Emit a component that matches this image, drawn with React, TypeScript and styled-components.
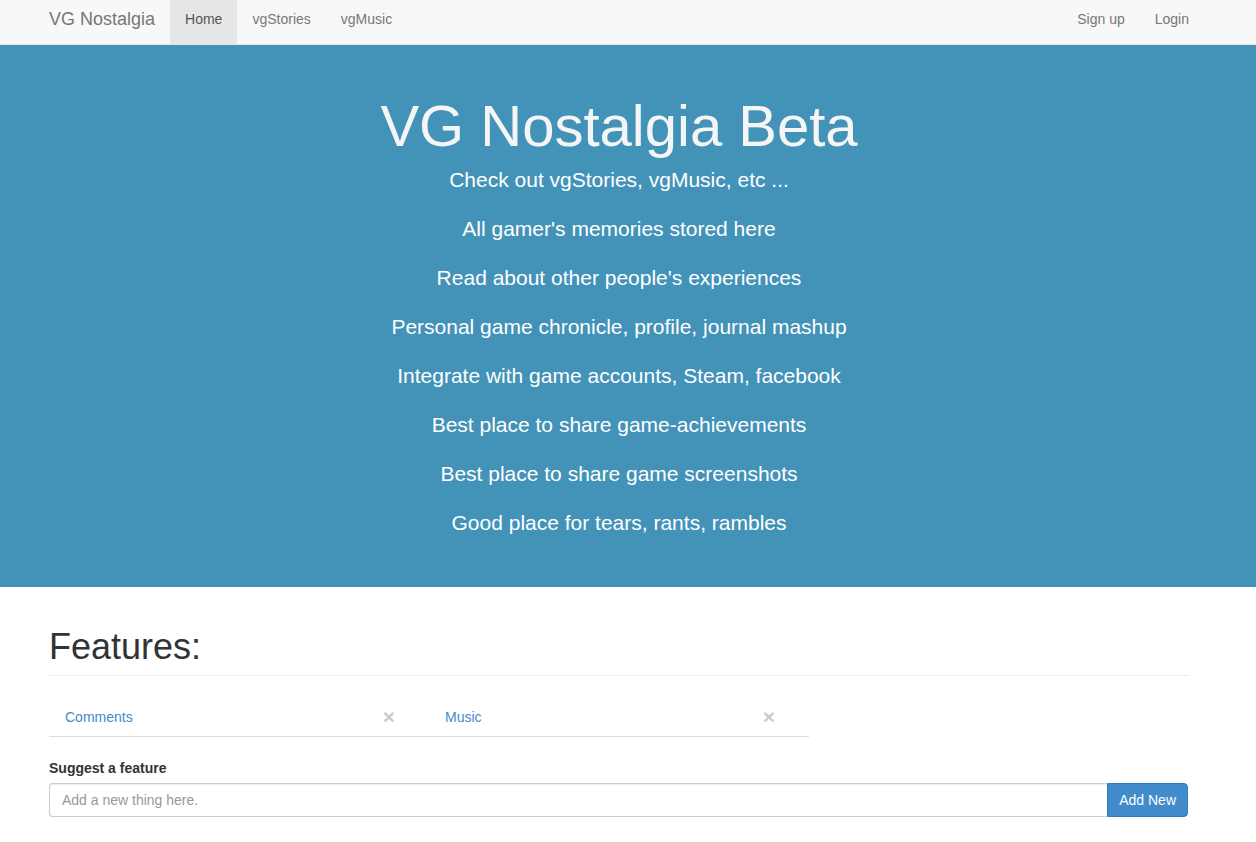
import React from "react";
import styled, { createGlobalStyle } from "styled-components";

const GlobalStyle = createGlobalStyle`
  * { box-sizing: border-box; }
  html, body { margin: 0; padding: 0; background: #fff; }
  body {
    font-family: "Liberation Sans", Arial, Helvetica, sans-serif;
    font-size: 14px;
    line-height: 20px;
    color: #333;
  }
`;

const Navbar = styled.nav`
  background: #f8f8f8;
  border-bottom: 1px solid #e7e7e7;
  height: 45px;
`;

const Container = styled.div`
  width: 1170px;
  margin-left: 34px;
  padding: 0 15px;
`;

const NavInner = styled(Container)`
  display: flex;
  height: 44px;
`;

const Brand = styled.a`
  display: block;
  margin-left: -15px;
  padding: 9px 15px 15px;
  font-size: 18px;
  line-height: 20px;
  color: #777;
  text-decoration: none;
`;

const NavList = styled.ul<{ $right?: boolean }>`
  display: flex;
  list-style: none;
  margin: 0;
  padding: 0;
  ${(p) => (p.$right ? "margin-left: auto; margin-right: -15px;" : "")}
`;

const NavLink = styled.a<{ $active?: boolean }>`
  display: block;
  height: 44px;
  padding: 9px 15px 15px;
  line-height: 20px;
  font-size: 14px;
  color: ${(p) => (p.$active ? "#555" : "#777")};
  background: ${(p) => (p.$active ? "#e7e7e7" : "transparent")};
  text-decoration: none;
`;

const Jumbotron = styled.section`
  background: #4393b9;
  color: #f5f5f5;
  text-align: center;
  padding: 46px 0 30px;
`;

const Title = styled.h1`
  margin: 0 0 5px;
  font-size: 58px;
  line-height: 69px;
  font-weight: 400;
  color: #f5f5f5;
`;

const Tagline = styled.p`
  margin: 0 0 19px;
  font-size: 21px;
  line-height: 30px;
  color: #fff;
`;

const PageHeader = styled.div`
  margin-top: 40px;
  padding-bottom: 8px;
  border-bottom: 1px solid #eee;
`;

const Heading = styled.h1`
  margin: 0;
  font-size: 36px;
  line-height: 40px;
  font-weight: 400;
  color: #333;
`;

const FeatureList = styled.ul`
  display: flex;
  list-style: none;
  margin: 20px 0 0;
  padding: 0;
`;

const FeatureItem = styled.li`
  width: 380px;
  display: flex;
  align-items: center;
  justify-content: space-between;
  padding: 11px 34px 9px 16px;
  border-bottom: 1px solid #ddd;
`;

const FeatureLink = styled.a`
  color: #428bca;
  text-decoration: none;
  font-size: 14px;
  line-height: 20px;
`;

const CloseBtn = styled.span`
  font-size: 21px;
  font-weight: bold;
  line-height: 20px;
  color: #000;
  opacity: 0.2;
`;

const Label = styled.label`
  display: block;
  margin-top: 21px;
  margin-bottom: 5px;
  font-weight: bold;
  font-size: 14px;
  line-height: 20px;
  color: #333;
`;

const InputGroup = styled.div`
  display: flex;
  height: 34px;
  margin-right: 1px;
`;

const Input = styled.input`
  flex: 1;
  min-width: 0;
  height: 34px;
  padding: 6px 12px;
  font-family: inherit;
  font-size: 14px;
  color: #555;
  border: 1px solid #ccc;
  border-right: none;
  border-radius: 4px 0 0 4px;
  box-shadow: inset 0 1px 1px rgba(0, 0, 0, 0.075);
  outline: none;
  &::placeholder { color: #999; }
`;

const Button = styled.button`
  flex: none;
  white-space: nowrap;
  height: 34px;
  padding: 6px 11px;
  font-family: inherit;
  font-size: 14px;
  line-height: 20px;
  color: #fff;
  background: #428bca;
  border: 1px solid #357ebd;
  border-radius: 0 4px 4px 0;
`;

const taglines = [
  "Check out vgStories, vgMusic, etc ...",
  "All gamer's memories stored here",
  "Read about other people's experiences",
  "Personal game chronicle, profile, journal mashup",
  "Integrate with game accounts, Steam, facebook",
  "Best place to share game-achievements",
  "Best place to share game screenshots",
  "Good place for tears, rants, rambles",
];

export default function App() {
  return (
    <>
      <GlobalStyle />
      <Navbar>
        <NavInner>
          <Brand href="#">VG Nostalgia</Brand>
          <NavList>
            <li><NavLink href="#" $active>Home</NavLink></li>
            <li><NavLink href="#">vgStories</NavLink></li>
            <li><NavLink href="#">vgMusic</NavLink></li>
          </NavList>
          <NavList $right>
            <li><NavLink href="#">Sign up</NavLink></li>
            <li><NavLink href="#">Login</NavLink></li>
          </NavList>
        </NavInner>
      </Navbar>
      <Jumbotron>
        <Container>
          <Title>VG Nostalgia Beta</Title>
          {taglines.map((t) => (
            <Tagline key={t}>{t}</Tagline>
          ))}
        </Container>
      </Jumbotron>
      <Container>
        <PageHeader>
          <Heading>Features:</Heading>
        </PageHeader>
        <FeatureList>
          <FeatureItem>
            <FeatureLink href="#">Comments</FeatureLink>
            <CloseBtn>×</CloseBtn>
          </FeatureItem>
          <FeatureItem>
            <FeatureLink href="#">Music</FeatureLink>
            <CloseBtn>×</CloseBtn>
          </FeatureItem>
        </FeatureList>
        <Label htmlFor="suggest">Suggest a feature</Label>
        <InputGroup>
          <Input id="suggest" placeholder="Add a new thing here." />
          <Button>Add New</Button>
        </InputGroup>
      </Container>
    </>
  );
}
